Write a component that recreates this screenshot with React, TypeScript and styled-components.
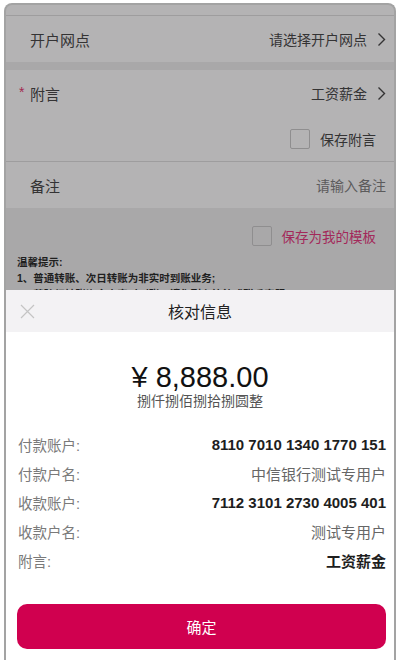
import styled, { createGlobalStyle } from "styled-components";

const GlobalStyle = createGlobalStyle`
  html, body {
    margin: 0;
    padding: 0;
    background: #ffffff;
  }
  body {
    font-family: "Liberation Sans", "Noto Sans CJK SC", sans-serif;
  }
`;

const Frame = styled.div`
  margin: 3px 4px 0;
  height: 657px;
  border: 2px solid #a3a3a3;
  border-bottom: none;
  border-radius: 8px 8px 0 0;
  overflow: hidden;
  display: flex;
  flex-direction: column;
  background: #a9a8a9;
`;

const Page = styled.div`
  height: 285px;
  overflow: hidden;
  flex-shrink: 0;
`;

const TopStrip = styled.div`
  height: 10px;
  background: #b4b3b4;
  border-bottom: 1px solid #9e9d9e;
`;

const Row = styled.div<{ $divider?: boolean; $height?: number }>`
  height: ${(p) => p.$height ?? 46}px;
  background: #b4b3b4;
  display: flex;
  align-items: center;
  justify-content: space-between;
  padding: 0 8px 0 24px;
  border-bottom: ${(p) => (p.$divider ? "1px solid #9e9d9e" : "none")};
  font-size: 15px;
  color: #343334;
`;

const Band = styled.div`
  height: 8px;
  background: #a9a8a9;
`;

const Label = styled.div<{ $required?: boolean }>`
  position: relative;
  &::before {
    content: ${(p) => (p.$required ? '"*"' : "none")};
    position: absolute;
    left: -11px;
    top: 1px;
    color: #a3284f;
    font-size: 14px;
  }
`;

const Value = styled.div<{ $placeholder?: boolean }>`
  display: flex;
  align-items: center;
  gap: 10px;
  font-size: 14px;
  color: ${(p) => (p.$placeholder ? "#5c5b5c" : "#343334")};
`;

const Check = styled.div`
  width: 18px;
  height: 18px;
  border: 1px solid #8f8e8f;
  border-radius: 2px;
`;

const CheckLine = styled.div<{ $accent?: boolean }>`
  display: flex;
  align-items: center;
  justify-content: flex-end;
  gap: 10px;
  font-size: ${(p) => (p.$accent ? 13.5 : 14)}px;
  color: ${(p) => (p.$accent ? "#a3285a" : "#343334")};
`;

const TemplateRow = styled.div`
  padding: 18px 18px 0 0;
  display: flex;
  justify-content: flex-end;
`;

const Tips = styled.div`
  margin-top: 8px;
  padding: 0 11px;
  font-size: 10.5px;
  line-height: 16px;
  font-weight: bold;
  color: #1f1f1f;
`;

const Sheet = styled.div`
  flex: 1;
  background: #ffffff;
  display: flex;
  flex-direction: column;
`;

const SheetHeader = styled.div`
  height: 42px;
  background: #f3f2f4;
  display: flex;
  align-items: center;
  justify-content: center;
  position: relative;
  font-size: 16px;
  color: #222222;
`;

const CloseButton = styled.div`
  position: absolute;
  left: 14px;
  top: 14px;
  width: 15px;
  height: 15px;
  display: flex;
`;

const Amount = styled.div`
  padding-top: 29px;
  text-align: center;
  font-size: 29px;
  line-height: 32px;
  color: #111111;
`;

const Capital = styled.div`
  margin-top: -1px;
  text-align: center;
  font-size: 14px;
  line-height: 18px;
  color: #555555;
`;

const DetailList = styled.div`
  margin-top: 20px;
  padding: 0 8px 0 12px;
`;

const DetailRow = styled.div`
  height: 29px;
  display: flex;
  align-items: center;
  justify-content: space-between;
`;

const DetailLabel = styled.div`
  font-size: 14.5px;
  color: #7a7a7a;
`;

const DetailValue = styled.div<{ $strong?: boolean }>`
  font-size: 15px;
  color: ${(p) => (p.$strong ? "#1e1e1e" : "#666666")};
  font-weight: ${(p) => (p.$strong ? 600 : 400)};
`;

const ConfirmButton = styled.button`
  margin: 29px 8px 0 11px;
  height: 45px;
  border: none;
  border-radius: 10px;
  background: #d0004f;
  color: #ffffff;
  font-family: inherit;
  font-size: 15px;
`;

function Chevron() {
  return (
    <svg width="9" height="15" viewBox="0 0 9 15">
      <path d="M1.5 1.5l6 6-6 6" fill="none" stroke="#343334" strokeWidth="1.4" />
    </svg>
  );
}

const details = [
  { label: "付款账户:", value: "8110 7010 1340 1770 151", strong: true },
  { label: "付款户名:", value: "中信银行测试专用户", strong: false },
  { label: "收款账户:", value: "7112 3101 2730 4005 401", strong: true },
  { label: "收款户名:", value: "测试专用户", strong: false },
  { label: "附言:", value: "工资薪金", strong: true },
];

export default function App() {
  return (
    <>
      <GlobalStyle />
      <Frame>
        <Page>
          <TopStrip />
          <Row>
            <Label>开户网点</Label>
            <Value>
              请选择开户网点
              <Chevron />
            </Value>
          </Row>
          <Band />
          <Row>
            <Label $required>附言</Label>
            <Value>
              工资薪金
              <Chevron />
            </Value>
          </Row>
          <Row $height={45} $divider style={{ justifyContent: "flex-end", paddingRight: 18 }}>
            <CheckLine>
              <Check />
              保存附言
            </CheckLine>
          </Row>
          <Row>
            <Label>备注</Label>
            <Value $placeholder>请输入备注</Value>
          </Row>
          <TemplateRow>
            <CheckLine $accent>
              <Check />
              保存为我的模板
            </CheckLine>
          </TemplateRow>
          <Tips>
            <div>温馨提示:</div>
            <div>1、普通转账、次日转账为非实时到账业务;</div>
            <div>2、若跨行转账资金未实时到账，请您耐心等待或联系客服。</div>
          </Tips>
        </Page>
        <Sheet>
          <SheetHeader>
            <CloseButton>
              <svg width="15" height="15" viewBox="0 0 15 15">
                <path d="M1 1l13 13M14 1L1 14" stroke="#c4c4c4" strokeWidth="1.2" />
              </svg>
            </CloseButton>
            核对信息
          </SheetHeader>
          <Amount>¥ 8,888.00</Amount>
          <Capital>捌仟捌佰捌拾捌圆整</Capital>
          <DetailList>
            {details.map((d) => (
              <DetailRow key={d.label}>
                <DetailLabel>{d.label}</DetailLabel>
                <DetailValue $strong={d.strong}>{d.value}</DetailValue>
              </DetailRow>
            ))}
          </DetailList>
          <ConfirmButton>确定</ConfirmButton>
        </Sheet>
      </Frame>
    </>
  );
}
